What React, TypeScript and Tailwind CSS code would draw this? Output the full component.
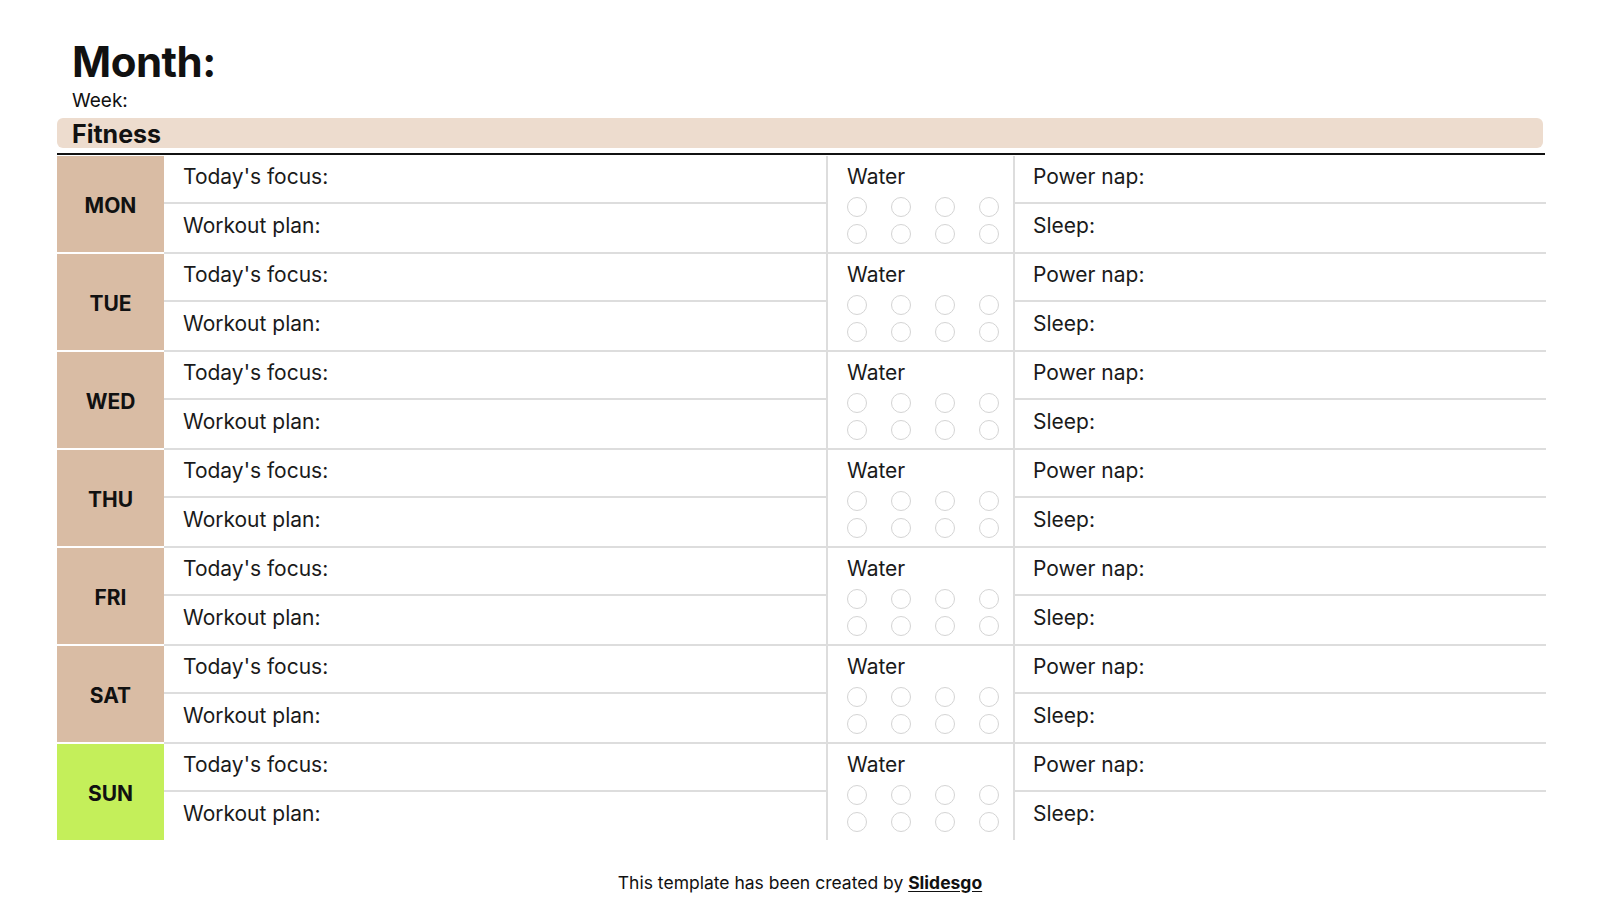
import React from 'react';

const DAYS = ['MON', 'TUE', 'WED', 'THU', 'FRI', 'SAT', 'SUN'];

function WaterDots() {
  return (
    <div className="grid grid-cols-4 gap-x-[24px] gap-y-[7px] w-fit mt-[8px]">
      {Array.from({ length: 8 }).map((_, i) => (
        <span key={i} className="w-[20px] h-[20px] rounded-full border-[1.5px] border-[#d4d4d4]" />
      ))}
    </div>
  );
}

function DayRow({ day, last }: { day: string; last: boolean }) {
  const isSun = day === 'SUN';
  return (
    <div className={`flex ${last ? 'h-[96px]' : 'h-[98px]'}`}>
      <div
        className={`w-[107px] shrink-0 flex items-center justify-center font-bold text-[21px] text-[#111] ${
          isSun ? 'bg-[#c4ef5a]' : 'bg-[#d9bca4] border-b-2 border-white'
        }`}
      >
        <span className="mt-[3px]">{day}</span>
      </div>
      <div className={`flex flex-1 ${last ? '' : 'border-b-2 border-[#dddddd]'}`}>
        <div className="w-[662px] flex flex-col">
          <div className="h-[48px] flex items-center pl-[19px] pb-[4px] border-b-2 border-[#dddddd]">
            Today's focus:
          </div>
          <div className="flex-1 flex items-center pl-[19px] pb-[4px]">Workout plan:</div>
        </div>
        <div className="w-[189px] border-x-2 border-[#dddddd] pl-[19px] pt-[9px]">
          <div className="leading-[24px]">Water</div>
          <WaterDots />
        </div>
        <div className="flex-1 flex flex-col">
          <div className="h-[48px] flex items-center pl-[18px] pb-[4px] border-b-2 border-[#dddddd]">
            Power nap:
          </div>
          <div className="flex-1 flex items-center pl-[18px] pb-[4px]">Sleep:</div>
        </div>
      </div>
    </div>
  );
}

export default function App() {
  return (
    <div className="w-[1600px] h-[900px] bg-white text-[#111] font-['Inter',sans-serif] pl-[57px] pt-[41px] relative">
      <h1 className="pl-[15px] text-[42px] font-bold leading-none tracking-[-0.5px]">Month:</h1>
      <p className="pl-[15px] mt-[8px] text-[19px] leading-none">Week:</p>
      <div className="mt-[8px] w-[1486px] h-[30px] rounded-[6px] bg-[#eddcce] flex items-center pl-[15px] pt-[2px]">
        <span className="text-[25px] font-bold leading-none">Fitness</span>
      </div>
      <div className="mt-[5px] w-[1488px] h-[2px] bg-[#111]" />
      <div className="mt-[1px] w-[1489px] text-[21px] text-[#1a1a1a]">
        {DAYS.map((d, i) => (
          <DayRow key={d} day={d} last={i === DAYS.length - 1} />
        ))}
      </div>
      <p className="absolute left-0 right-0 top-[870px] text-center text-[17.5px] text-[#111]">
        This template has been created by{' '}
        <span className="font-bold underline underline-offset-2">Slidesgo</span>
      </p>
    </div>
  );
}
